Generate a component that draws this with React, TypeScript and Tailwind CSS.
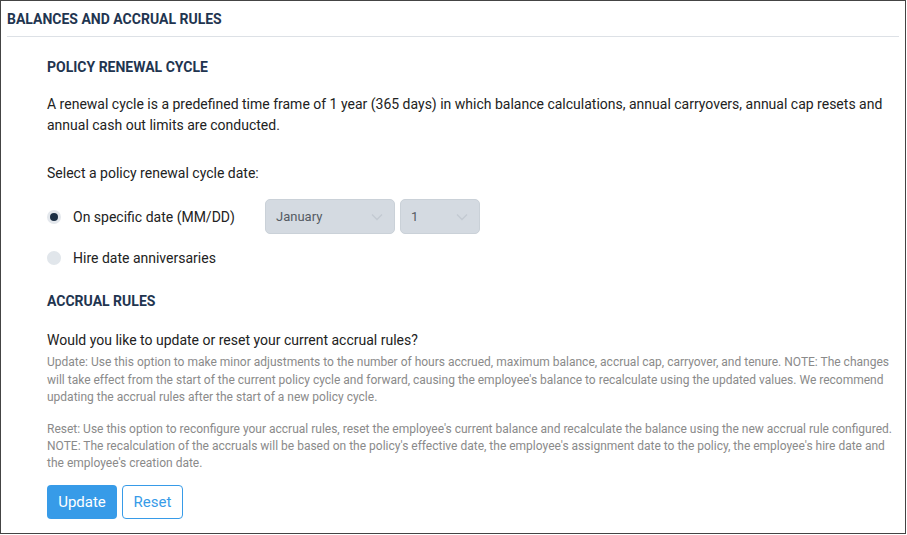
import React from "react";

function Chevron() {
  return (
    <svg width="12" height="8" viewBox="0 0 12 8" fill="none" className="shrink-0">
      <path d="M1 1.5L6 6.5L11 1.5" stroke="#c3cad2" strokeWidth="1.3" />
    </svg>
  );
}

export default function App() {
  return (
    <div
      className="w-[906px] h-[534px] border border-[#444444] bg-white overflow-hidden text-[#222222]"
      style={{ fontFamily: "Roboto, 'Liberation Sans', sans-serif" }}
    >
      <div className="mx-[6px] h-[36px] border-b border-[#dde1e6] flex items-center">
        <h1 className="text-[14px] font-bold text-[#1f3550] leading-5">BALANCES AND ACCRUAL RULES</h1>
      </div>

      <div className="pl-[46px] pr-[6px]">
        <h2 className="mt-[20px] text-[14px] font-bold text-[#1f3550] leading-5">POLICY RENEWAL CYCLE</h2>
        <p className="mt-[17px] text-[14px] leading-[21px]">
          A renewal cycle is a predefined time frame of 1 year (365 days) in which balance calculations, annual carryovers, annual cap resets and annual cash out limits are conducted.
        </p>
        <p className="mt-[27px] text-[14px] leading-5">Select a policy renewal cycle date:</p>

        <div className="mt-[16px] flex items-center h-[35px]">
          <div className="w-[14px] h-[14px] rounded-full bg-[#e3e7ec] flex items-center justify-center">
            <div className="w-[8px] h-[8px] rounded-full bg-[#1c2f45]" />
          </div>
          <span className="ml-[12px] text-[14px] leading-5 w-[192px]">On specific date (MM/DD)</span>
          <div className="flex gap-[5px]">
            <div className="w-[130px] h-[35px] rounded-[5px] bg-[#d4dae1] border border-[#cad1d8] flex items-center justify-between pl-[10px] pr-[11px]">
              <span className="text-[13px] text-[#555b63]">January</span>
              <Chevron />
            </div>
            <div className="w-[80px] h-[35px] rounded-[5px] bg-[#d4dae1] border border-[#cad1d8] flex items-center justify-between pl-[10px] pr-[11px]">
              <span className="text-[13px] text-[#555b63]">1</span>
              <Chevron />
            </div>
          </div>
        </div>

        <div className="mt-[14px] flex items-center h-[20px]">
          <div className="w-[14px] h-[14px] rounded-full bg-[#e1e6eb]" />
          <span className="ml-[12px] text-[14px] leading-5">Hire date anniversaries</span>
        </div>

        <h2 className="mt-[23px] text-[14px] font-bold text-[#1f3550] leading-5">ACCRUAL RULES</h2>
        <p className="mt-[19px] text-[14px] leading-5">Would you like to update or reset your current accrual rules?</p>
        <p className="mt-[4px] text-[12px] leading-[17.5px] text-[#8a8a8a] pr-[4px]">
          Update: Use this option to make minor adjustments to the number of hours accrued, maximum balance, accrual cap, carryover, and tenure. NOTE: The changes will take effect from the start of the current policy cycle and forward, causing the employee's balance to recalculate using the updated values. We recommend updating the accrual rules after the start of a new policy cycle.
        </p>
        <p className="mt-[14px] text-[12px] leading-[17.25px] text-[#8a8a8a]">
          Reset: Use this option to reconfigure your accrual rules, reset the employee's current balance and recalculate the balance using the new accrual rule configured. NOTE: The recalculation of the accruals will be based on the policy's effective date, the employee's assignment date to the policy, the employee's hire date and the employee's creation date.
        </p>

        <div className="mt-[13px] flex gap-[5px]">
          <button className="w-[70px] h-[34px] rounded-[4px] bg-[#379be8] text-white text-[15px]">Update</button>
          <button className="w-[61px] h-[34px] rounded-[4px] border border-[#379be8] bg-white text-[#379be8] text-[15px]">Reset</button>
        </div>
      </div>
    </div>
  );
}
